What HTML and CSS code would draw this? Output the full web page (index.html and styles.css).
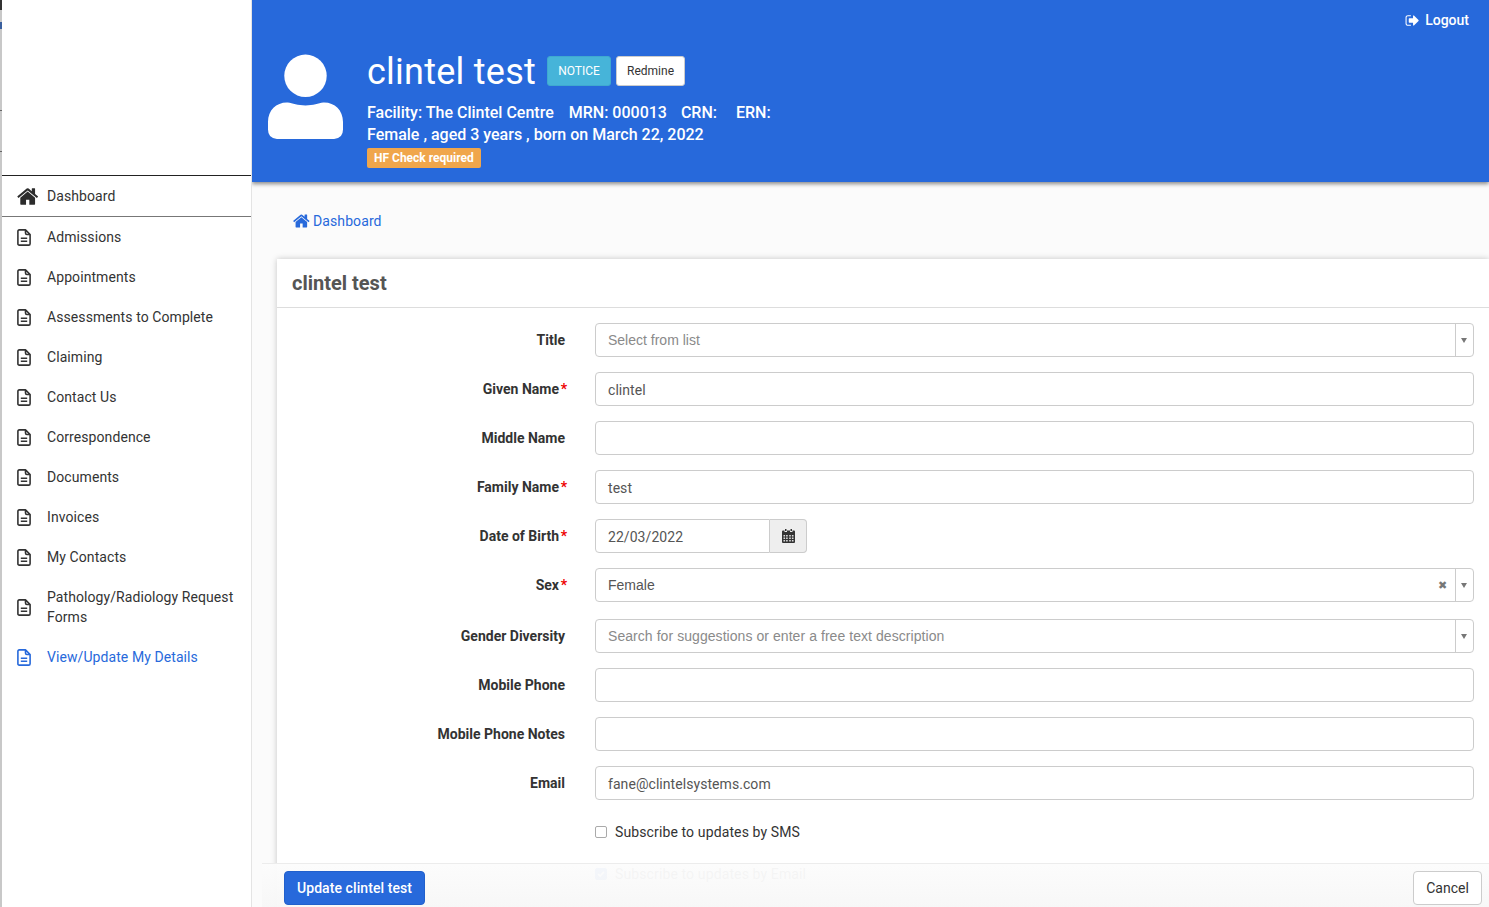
FILE: index.html
```html
<!DOCTYPE html>
<html lang="en">
<head>
<meta charset="utf-8">
<title>clintel test</title>
<link rel="stylesheet" href="styles.css">
</head>
<body>
<svg class="sprites" width="0" height="0" aria-hidden="true">
  <symbol id="i-home" viewBox="0 0 1792 1792"><path fill="currentColor" d="M1408 992v480q0 26-19 45t-45 19h-384v-384h-256v384h-384q-26 0-45-19t-19-45v-480q0-1 .5-3t.5-3l575-474 575 474q1 2 1 6zm223-69l-62 74q-8 9-21 11h-3q-13 0-21-7l-692-577-692 577q-12 8-24 7-13-2-21-11l-62-74q-8-10-7-23.500t11-21.500l719-599q32-26 76-26t76 26l244 204v-195q0-14 9-23t23-9h192q14 0 23 9t9 23v408l219 182q10 8 11 21.500t-7 23.500z"/></symbol>
  <symbol id="i-doc" viewBox="0 0 14 17"><path fill="none" stroke="currentColor" stroke-width="1.6" stroke-linejoin="round" d="M2.300.9h6.200l4.600 4.600v9.200q0 1.400-1.400 1.400H2.300q-1.400 0-1.400-1.400V2.300q0-1.400 1.400-1.400zM8.500.9v3.200q0 1.400 1.400 1.400h3.200"/><path fill="none" stroke="currentColor" stroke-width="1.500" d="M3.800 9.200h6.400M3.800 12.200h6.400"/></symbol>
  <symbol id="i-out" viewBox="0 0 1792 1792"><path fill="currentColor" d="M704 1440q0 4 1 20t.5 26.500-3 23.500-10 19.500-20.500 6.500h-320q-119 0-203.500-84.500t-84.500-203.500v-704q0-119 84.500-203.500t203.500-84.500h320q13 0 22.500 9.500t9.500 22.500q0 4 1 20t.5 26.500-3 23.500-10 19.500-20.500 6.500h-320q-66 0-113 47t-47 113v704q0 66 47 113t113 47h312l11.500 1 11.500 3 8 5.500 7 9 2 13.500zm928-544q0 26-19 45l-544 544q-19 19-45 19t-45-19-19-45v-288h-448q-26 0-45-19t-19-45v-384q0-26 19-45t45-19h448v-288q0-26 19-45t45-19 45 19l544 544q19 19 19 45z"/></symbol>
</svg>

<div class="app">
  <aside class="sidebar">
    <div class="edge"><i class="mark mark-a"></i><i class="mark mark-b"></i><i class="mark mark-c"></i><i class="mark mark-d"></i></div>
    <nav class="menu">
      <a class="item item-home"><svg class="ico-home"><use href="#i-home"/></svg><span>Dashboard</span></a>
      <a class="item"><svg class="ico-doc"><use href="#i-doc"/></svg><span>Admissions</span></a>
      <a class="item"><svg class="ico-doc"><use href="#i-doc"/></svg><span>Appointments</span></a>
      <a class="item"><svg class="ico-doc"><use href="#i-doc"/></svg><span>Assessments to Complete</span></a>
      <a class="item"><svg class="ico-doc"><use href="#i-doc"/></svg><span>Claiming</span></a>
      <a class="item"><svg class="ico-doc"><use href="#i-doc"/></svg><span>Contact Us</span></a>
      <a class="item"><svg class="ico-doc"><use href="#i-doc"/></svg><span>Correspondence</span></a>
      <a class="item"><svg class="ico-doc"><use href="#i-doc"/></svg><span>Documents</span></a>
      <a class="item"><svg class="ico-doc"><use href="#i-doc"/></svg><span>Invoices</span></a>
      <a class="item"><svg class="ico-doc"><use href="#i-doc"/></svg><span>My Contacts</span></a>
      <a class="item item-two"><svg class="ico-doc"><use href="#i-doc"/></svg><span>Pathology/Radiology Request Forms</span></a>
      <a class="item item-active"><svg class="ico-doc"><use href="#i-doc"/></svg><span>View/Update My Details</span></a>
    </nav>
  </aside>

  <main class="main">
    <header class="banner">
      <a class="logout"><svg class="ico-out"><use href="#i-out"/></svg>Logout</a>
      <svg class="avatar" viewBox="0 0 76 86" aria-hidden="true">
        <circle cx="38" cy="21.500" r="21.500" fill="#fff"/>
        <path fill="#fff" d="M0 76V68C0 56 9 48 20 48.500c5 .5 10 3 18 3s13-2.500 18-3C67 48 76 56 76 68v8q0 9-9 9.500H9q-9-.5-9-9.500z"/>
      </svg>
      <div class="who">
        <div class="who-title">
          <h1>clintel test</h1>
          <a class="btn-notice">NOTICE</a>
          <a class="btn-redmine">Redmine</a>
        </div>
        <p class="who-line who-ids"><span>Facility: The Clintel Centre</span><span>MRN: 000013</span><span>CRN:</span><span>ERN:</span></p>
        <p class="who-line">Female , aged 3 years , born on March 22, 2022</p>
        <span class="tag">HF Check required</span>
      </div>
    </header>

    <section class="content">
      <a class="crumb"><svg class="ico-crumb"><use href="#i-home"/></svg>Dashboard</a>
      <div class="card">
        <h2 class="card-title">clintel test</h2>
        <form class="form">
          <div class="row"><label>Title</label>
            <div class="combo"><span class="ph">Select from list</span><span class="caret"></span></div></div>
          <div class="row"><label class="req">Given Name</label><div class="input">clintel</div></div>
          <div class="row"><label>Middle Name</label><div class="input"></div></div>
          <div class="row"><label class="req">Family Name</label><div class="input">test</div></div>
          <div class="row"><label class="req">Date of Birth</label>
            <div class="date"><div class="date-val">22/03/2022</div>
              <div class="date-btn"><svg class="ico-cal" viewBox="0 0 13 14" aria-hidden="true"><path fill="#333" d="M3 0h1.500v2H3zM8.500 0H10v2H8.500zM1 1.500h1.500v1.500H5V1.500h3V3h2.500V1.500H12q1 0 1 1V13q0 1-1 1H1q-1 0-1-1V2.500q0-1 1-1z"/><path fill="#ddd" d="M1.500 6h1.600v1.400H1.500zM4.100 6h1.600v1.400H4.100zM7.200 6h1.600v1.400H7.200zM9.900 6h1.600v1.400H9.900zM1.500 8.500h1.600v1.400H1.500zM4.100 8.500h1.600v1.400H4.100zM7.200 8.500h1.600v1.400H7.200zM9.900 8.500h1.600v1.400H9.900zM1.500 11h1.600v1.400H1.500zM4.100 11h1.600v1.400H4.100zM7.200 11h1.600v1.400H7.200zM9.900 11h1.600v1.400H9.900z"/></svg></div></div></div>
          <div class="row row-tall"><label class="req">Sex</label>
            <div class="combo"><span class="val">Female</span><span class="clear">&#10006;</span><span class="caret"></span></div></div>
          <div class="row"><label>Gender Diversity</label>
            <div class="combo"><span class="ph ph-long">Search for suggestions or enter a free text description</span><span class="caret"></span></div></div>
          <div class="row"><label>Mobile Phone</label><div class="input"></div></div>
          <div class="row"><label>Mobile Phone Notes</label><div class="input"></div></div>
          <div class="row row-last"><label>Email</label><div class="input">fane@clintelsystems.com</div></div>
          <div class="row row-check"><span></span><div class="check"><span class="box"></span>Subscribe to updates by SMS</div></div>
          <div class="row row-check"><span></span><div class="check"><span class="box box-on"><svg viewBox="0 0 12 12" aria-hidden="true"><path fill="none" stroke="#fff" stroke-width="2" d="M2.500 6l2.500 2.500 4.500-5"/></svg></span>Subscribe to updates by Email</div></div>
        </form>
      </div>
    </section>

    <footer class="actions">
      <a class="btn-primary">Update clintel test</a>
      <a class="btn-cancel">Cancel</a>
    </footer>
  </main>
</div>
</body>
</html>
```

FILE: styles.css
```css
* { box-sizing: border-box; }
html, body { margin: 0; height: 100%; overflow: hidden; }
body { font-family: Roboto, "Liberation Sans", sans-serif; font-size: 14px; color: #333; background: #fff; }
.sprites { position: absolute; }
.app { display: flex; height: 907px; }

.sidebar { position: relative; flex: 0 0 252px; padding: 175px 0 0 2px; background: #fff; border-right: 1px solid #e4e4e4; }
.edge { position: absolute; left: 0; top: 0; bottom: 0; width: 2px; background: #c8c8c8; }
.mark { position: absolute; left: 0; width: 2px; }
.mark-a { top: 0; height: 10px; background: #333; }
.mark-b { top: 22px; height: 7px; background: #3a5f9e; }
.mark-c { top: 110px; height: 1px; background: #666; }
.mark-d { top: 151px; height: 1px; background: #666; }
.menu { display: flex; flex-direction: column; }
.item { display: flex; align-items: center; min-height: 40px; padding: 0 15px; gap: 16px; color: #333; line-height: 20px; letter-spacing: .08px; }
.item span { flex: 1; }
.item-home { height: 42px; border-top: 1px solid #222; border-bottom: 1px solid #777; gap: 7px; }
.item-two { min-height: 60px; }
.item-active { color: #2769db; }
.ico-home { width: 23px; height: 23px; flex: none; color: #2c2c2c; }
.ico-doc { width: 14px; height: 17px; flex: none; }

.main { position: relative; flex: 1; min-width: 0; display: flex; flex-direction: column; overflow: hidden; background: #fbfbfb; }
.banner { position: relative; z-index: 2; flex: 0 0 182px; display: flex; background: #2769db; color: #fff; box-shadow: 0 2px 4px rgba(0,0,0,.45); padding: 54px 0 0 16px; }
.logout { position: absolute; top: 11px; right: 20px; display: flex; align-items: center; gap: 5px; font-weight: 500; line-height: 18px; }
.ico-out { width: 15px; height: 15px; }
.avatar { width: 75px; height: 86px; flex: none; align-self: flex-start; }
.who { margin: 0 0 0 24px; }
.who-title { display: flex; align-items: center; height: 34px; }
.who-title h1 { margin: 1px 11px 0 0; font-size: 36px; font-weight: 400; line-height: 34px; letter-spacing: .25px; }
.btn-notice { display: block; width: 64px; height: 30px; margin-right: 5px; background: #46b4d9; border: 1px solid #3fa9cf; border-radius: 3px; color: #fff; font-size: 12px; line-height: 29px; text-align: center; }
.btn-redmine { display: block; width: 69px; height: 30px; background: #fff; border: 1px solid #ccc; border-radius: 3px; color: #333; font-size: 12px; line-height: 29px; text-align: center; }
.who-line { margin: 0; font-size: 16px; font-weight: 500; line-height: 22px; }
.who-ids { display: flex; margin-top: 14px; }
.who-ids span { margin-right: 14px; }
.who-ids span:first-child { margin-right: 15px; }
.who-ids span:nth-child(3) { margin-right: 19px; }
.tag { display: inline-block; height: 20px; margin-top: 2px; padding: 0 7px; background: #f0a64b; border-radius: 2px; font-size: 12px; font-weight: 700; line-height: 20px; vertical-align: top; }

.content { flex: 1; padding: 29px 0 0 25px; }
.crumb { display: flex; align-items: center; height: 20px; padding-left: 16px; gap: 2px; color: #2769db; line-height: 20px; letter-spacing: .1px; }
.ico-crumb { width: 18px; height: 18px; }
.card { margin-top: 28px; background: #fff; box-shadow: 0 0 6px rgba(0,0,0,.22); min-height: 700px; }
.card-title { margin: 0; height: 49px; padding: 0 15px; border-bottom: 1px solid #ddd; color: #555; font-size: 20px; font-weight: 700; line-height: 48px; }
.form { padding: 15px 15px 0 0; }
.row { display: grid; grid-template-columns: 288px 1fr; column-gap: 30px; height: 34px; margin-bottom: 15px; align-items: start; }
.row-tall { height: 36px; }
.row-last { margin-bottom: 22px; }
.row-check { height: 20px; margin-bottom: 22px; }
.row label { padding-top: 7px; text-align: right; font-weight: 700; line-height: 20px; color: #333; }
.req { position: relative; padding-right: 6px; }
.req::after { content: "*"; position: absolute; right: -2px; top: 7px; color: #e00; font-weight: 700; }
.input, .date-val { height: 34px; font-size: 14px; color: #555; background: #fff; border: 1px solid #ccc; line-height: 34px; letter-spacing: .06px; }
.combo { display: flex; height: 34px; font-family: "Liberation Sans", Arial, sans-serif; font-size: 14px; color: #555; background: #fff; border: 1px solid #ccc; border-radius: 4px; line-height: 32px; }
.input { padding: 0 12px; border-radius: 4px; }
.ph { flex: 1; padding-left: 12px; color: #8a8a8a; }
.ph-long { letter-spacing: .06px; }
.val { flex: 1; padding-left: 12px; }
.clear { width: 18px; padding-right: 7px; color: #777; font-size: 11px; text-align: center; }
.caret { position: relative; flex: 0 0 18px; border-left: 1px solid #ccc; }
.caret::after { content: ""; position: absolute; left: 5px; top: 14px; border: 3.500px solid transparent; border-top: 5px solid #777; border-bottom: 0; }
.date { display: flex; width: 212px; }
.date-val { width: 175px; padding: 0 12px; border-radius: 4px 0 0 4px; }
.date-btn { display: flex; flex: 1; align-items: center; justify-content: center; background: #eee; border: 1px solid #ccc; border-left: 0; border-radius: 0 4px 4px 0; }
.ico-cal { width: 13px; height: 14px; }
.check { display: flex; align-items: center; gap: 8px; height: 20px; line-height: 20px; color: #333; letter-spacing: .12px; }
.box { display: block; width: 12px; height: 12px; border: 1px solid #aaa; border-radius: 2px; background: #fff; }
.box-on { background: #2769db; border-color: #2769db; }
.box-on svg { display: block; width: 10px; height: 10px; }

.actions { position: absolute; left: 10px; right: 0; bottom: 0; height: 44px; display: flex; justify-content: space-between; align-items: flex-start; padding: 7px 7px 0 22px; background: linear-gradient(rgba(252,252,252,.96), rgba(247,247,247,.98)); border-top: 1px solid #ececec; z-index: 3; }
.btn-primary { display: block; width: 141px; height: 34px; background: #2769db; border: 1px solid #2160cc; border-radius: 4px; color: #fff; font-weight: 500; line-height: 32px; text-align: center; letter-spacing: .08px; }
.btn-cancel { display: block; width: 69px; height: 34px; background: #fff; border: 1px solid #ccc; border-radius: 4px; color: #333; line-height: 32px; text-align: center; }
```
